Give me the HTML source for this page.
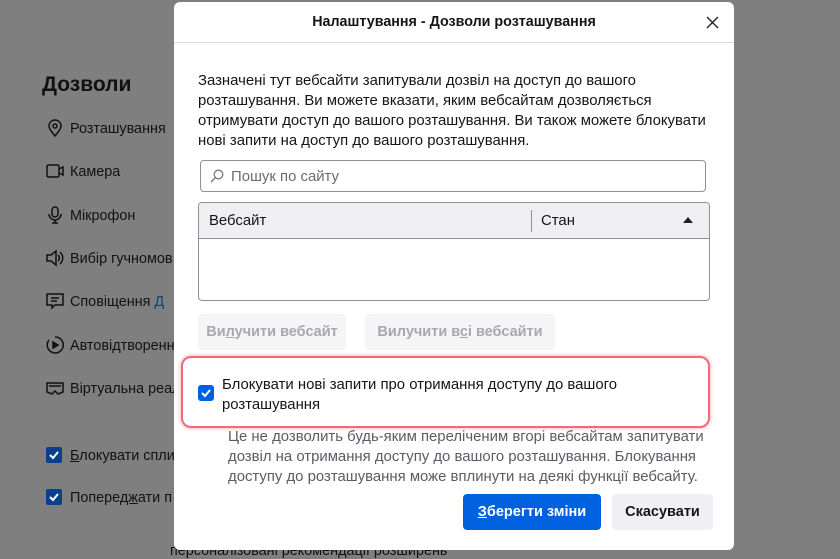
<!DOCTYPE html>
<html><head><meta charset="utf-8"><style>
*{box-sizing:border-box;margin:0;padding:0}
body{width:840px;height:552px;background:#7f7f7f;font-family:"Liberation Sans","Noto Sans CJK SC",sans-serif;position:relative;overflow:hidden;color:#111}
.a{position:absolute}
.bg{color:#121212;font-size:14.4px}
.ic{position:absolute;left:46px;width:18px;height:18px}
.cb{position:absolute;width:16px;height:16px;background:#0c3f8a;border-radius:2px}
.cb svg{position:absolute;left:2px;top:2px}
#dlg{left:174px;top:2px;width:560px;height:548px;background:#fff;border-radius:6px}
.t{font-size:14.9px;color:#15141a;line-height:20px;white-space:nowrap}
</style></head><body>
<div class="a" style="left:42px;top:73px;font-size:21px;font-weight:bold;color:#111">Дозволи</div>
<svg class="ic" style="top:119px" viewBox="0 0 18 18" fill="none" stroke="#111" stroke-width="1.5"><path d="M9 17C5 12 3 9.5 3 7a6 6 0 0112 0c0 2.5-2 5-6 10z"/><circle cx="9" cy="7" r="2"/></svg>
<div class="a bg" style="left:70px;top:121px">Розташування</div>
<svg class="ic" style="top:162px" viewBox="0 0 18 18" fill="none" stroke="#111" stroke-width="1.5"><rect x="1" y="3" width="12" height="12" rx="1.5"/><path d="M13 7l4-2v8l-4-2"/></svg>
<div class="a bg" style="left:70px;top:164px">Камера</div>
<svg class="ic" style="top:206px" viewBox="0 0 18 18" fill="none" stroke="#111" stroke-width="1.5"><rect x="6" y="1" width="6" height="10" rx="3"/><path d="M3 8a6 6 0 0012 0M9 14v3M6 17h6"/></svg>
<div class="a bg" style="left:70px;top:208px">Мікрофон</div>
<svg class="ic" style="top:249px" viewBox="0 0 18 18" fill="none" stroke="#111" stroke-width="1.5"><path d="M1 6h4l5-4v14l-5-4H1z"/><path d="M12 6a4 4 0 010 6M14 3a8 8 0 010 12"/></svg>
<div class="a bg" style="left:70px;top:251px">Вибір гучномов</div>
<svg class="ic" style="top:292px" viewBox="0 0 18 18" fill="none" stroke="#111" stroke-width="1.5"><path d="M1 2h16v11H9l-3 3v-3H1z"/><path d="M5 6h8M5 9h6"/></svg>
<div class="a bg" style="left:70px;top:294px">Сповіщення <span style="color:#0c3f8a">Д</span></div>
<svg class="ic" style="top:336px" viewBox="0 0 18 18" fill="none" stroke="#111" stroke-width="1.5"><path d="M3 4a8 8 0 1 0 6-3"/><path d="M7 6l5 3-5 3z" fill="#111"/></svg>
<div class="a bg" style="left:70px;top:338px">Автовідтворенн</div>
<svg class="ic" style="top:379px" viewBox="0 0 18 18" fill="none" stroke="#111" stroke-width="1.5"><path d="M1 4h16v9l-5 2-3-3-3 3-5-2z"/><path d="M3 7h12"/></svg>
<div class="a bg" style="left:70px;top:381px">Віртуальна реал</div>
<div class="cb" style="left:46px;top:447px"><svg width="12" height="12" viewBox="0 0 12 12"><path d="M2 6l3 3 5-6" stroke="#fff" stroke-width="2" fill="none"/></svg></div>
<div class="a bg" style="left:70px;top:448px"><u>Б</u>локувати спли</div>
<div class="cb" style="left:46px;top:489px"><svg width="12" height="12" viewBox="0 0 12 12"><path d="M2 6l3 3 5-6" stroke="#fff" stroke-width="2" fill="none"/></svg></div>
<div class="a bg" style="left:70px;top:490px">Попере<u>дж</u>ати п</div>
<div class="a bg" style="left:170px;top:543px">персоналізовані рекомендації розширень</div>

<div id="dlg" class="a">
<div class="a" style="left:0;top:0;width:560px;height:41px;border-bottom:1px solid #ddd;text-align:center;font-weight:bold;font-size:14.3px;line-height:41px;color:#15141a">Налаштування - Дозволи розташування</div>
<svg class="a" style="left:532px;top:14px" width="13" height="13" viewBox="0 0 13 13"><path d="M1 1l11 11M12 1L1 12" stroke="#222" stroke-width="1.4"/></svg>
<div class="a t" style="left:24px;top:69px">Зазначені тут вебсайти запитували дозвіл на доступ до вашого<br>розташування. Ви можете вказати, яким вебсайтам дозволяється<br>отримувати доступ до вашого розташування. Ви також можете блокувати<br>нові запити на доступ до вашого розташування.</div>
<div class="a" style="left:26px;top:158px;width:506px;height:32px;border:1px solid #8f8f9d;border-radius:4px"></div>
<svg class="a" style="left:36px;top:167px" width="14" height="14" viewBox="0 0 14 14" fill="none" stroke="#777" stroke-width="1.3"><circle cx="8.5" cy="5.5" r="4.3"/><path d="M5.5 8.5L1 13"/></svg>
<div class="a t" style="left:57px;top:165px;color:#6c6c72">Пошук по сайту</div>
<div class="a" style="left:24px;top:200px;width:512px;height:99px;border:1px solid #8f8f9d;border-radius:4px;overflow:hidden">
<div style="height:36px;background:#efeff1;border-bottom:1px solid #8f8f9d;position:relative">
<div class="a t" style="left:10px;top:8px">Вебсайт</div>
<div class="a" style="left:332px;top:7px;width:1px;height:22px;background:#8f8f9d"></div>
<div class="a t" style="left:342px;top:8px">Стан</div>
<svg class="a" style="left:484px;top:14px" width="10" height="6"><path d="M0 6L5 0 10 6z" fill="#222"/></svg>
</div></div>
<div class="a" style="left:24px;top:312px;width:148px;height:36px;background:#f5f5f7;border-radius:4px;font-weight:bold;font-size:14.5px;color:#a8a8ad;text-align:center;line-height:37px">Ви<u>л</u>учити вебсайт</div>
<div class="a" style="left:191px;top:312px;width:190px;height:36px;background:#f5f5f7;border-radius:4px;font-weight:bold;font-size:14.5px;color:#a8a8ad;text-align:center;line-height:37px">Вилучити в<u>с</u>і вебсайти</div>
<div class="a" style="left:7px;top:354px;width:529px;height:72px;border:2px solid #ee6b78;border-radius:10px;box-shadow:0 0 4px #f2a0a8"></div>
<div class="a" style="left:24px;top:383px;width:16px;height:16px;background:#0061e0;border-radius:3px"><svg style="position:absolute;left:2px;top:2px" width="12" height="12" viewBox="0 0 12 12"><path d="M2 6l3 3 5-6" stroke="#fff" stroke-width="2" fill="none"/></svg></div>
<div class="a t" style="left:48px;top:373px">Блокувати нові запити про отримання доступу до вашого<br>розташування</div>
<div class="a t" style="left:54px;top:425px;color:#5b5b66">Це не дозволить будь-яким переліченим вгорі вебсайтам запитувати<br>дозвіл на отримання доступу до вашого розташування. Блокування<br>доступу до розташування може вплинути на деякі функції вебсайту.</div>
<div class="a" style="left:289px;top:492px;width:138px;height:36px;background:#0061e0;border-radius:4px;color:#fff;font-weight:bold;font-size:14.5px;text-align:center;line-height:37px"><u>З</u>берегти зміни</div>
<div class="a" style="left:438px;top:492px;width:101px;height:36px;background:#f0f0f4;border-radius:4px;color:#15141a;font-weight:bold;font-size:14.5px;text-align:center;line-height:37px">Скасувати</div>
</div>
</body></html>
